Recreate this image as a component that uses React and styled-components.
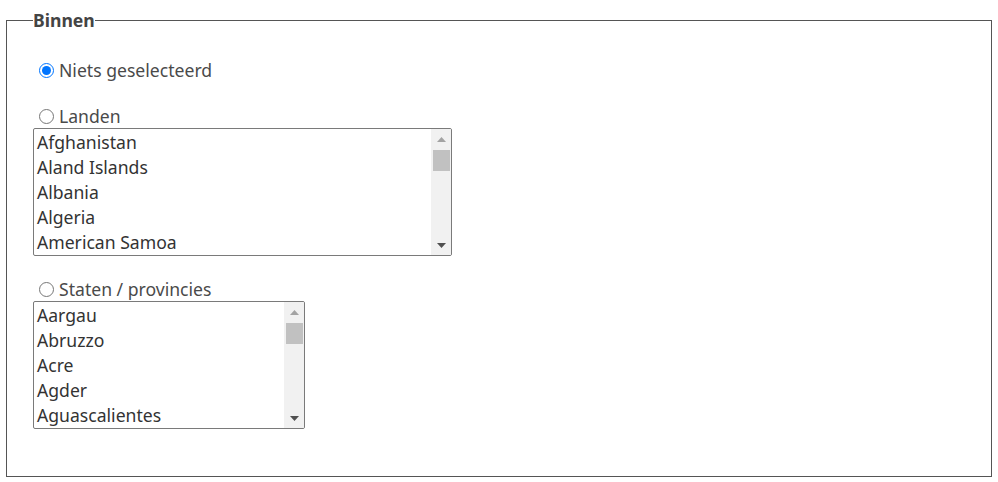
import React from "react";
import styled, { createGlobalStyle } from "styled-components";

const Global = createGlobalStyle`
  html, body { margin: 0; padding: 0; background: #fff; }
  body { font-family: "Noto Sans", "Open Sans", sans-serif; color: #4a4a4a; }
`;

const Page = styled.div`
  padding: 8px 6px 0 6px;
`;

const Fieldset = styled.fieldset`
  margin: 0;
  border: 1px solid #555;
  padding: 26px 26px 47px 26px;
  min-height: 0;
`;

const Legend = styled.legend`
  font-weight: bold;
  font-size: 17.6px;
  color: #444;
  padding: 0;
  line-height: 24px;
`;

const Group = styled.div`
  display: flex;
  flex-direction: column;
  align-items: flex-start;
  margin-top: ${(p) => p.$gap || 0}px;
`;

const Label = styled.label`
  display: flex;
  align-items: center;
  font-size: 17.6px;
  line-height: 24px;
  height: 24px;
  color: #4a4a4a;
  cursor: pointer;
`;

const Radio = styled.input.attrs({ type: "radio" })`
  margin: 0 5px 0 6px;
  width: 15px;
  height: 15px;
`;

const Box = styled.div`
  box-sizing: border-box;
  display: flex;
  width: ${(p) => p.$w}px;
  height: 128px;
  border: 1px solid #7a7a7a;
  border-radius: 2px;
  background: #fff;
  overflow: hidden;
`;

const Options = styled.div`
  flex: 1;
  padding-top: 1px;
  overflow-y: scroll;
  scrollbar-width: none;
  &::-webkit-scrollbar { display: none; }
`;

const Option = styled.div`
  font-size: 17.6px;
  line-height: 25px;
  height: 25px;
  padding: 0 3px;
  color: #333;
  white-space: nowrap;
  cursor: default;
`;

const Scrollbar = styled.div`
  width: 20px;
  flex: none;
  background: #f1f1f1;
  display: flex;
  flex-direction: column;
  align-items: center;
`;

const ArrowButton = styled.div`
  width: 100%;
  height: 20px;
  flex: none;
  display: flex;
  align-items: center;
  justify-content: center;
`;

const Track = styled.div`
  flex: 1;
  width: 100%;
  padding: 1px 1px 0 2px;
  box-sizing: border-box;
`;

const Thumb = styled.div`
  height: 21px;
  background: #c1c1c1;
`;

function Arrow({ up, color }) {
  return (
    <svg width="9" height="5" viewBox="0 0 9 5">
      <polygon
        points={up ? "0,5 9,5 4.5,0" : "0,0 9,0 4.5,5"}
        fill={color}
      />
    </svg>
  );
}

function ListBox({ items, width }) {
  return (
    <Box $w={width} role="listbox" aria-multiselectable="true">
      <Options>
        {items.map((it) => (
          <Option key={it} role="option" aria-selected="false">
            {it}
          </Option>
        ))}
      </Options>
      <Scrollbar>
        <ArrowButton>
          <Arrow up color="#a3a3a3" />
        </ArrowButton>
        <Track>
          <Thumb />
        </Track>
        <ArrowButton>
          <Arrow color="#505050" />
        </ArrowButton>
      </Scrollbar>
    </Box>
  );
}

const countries = [
  "Afghanistan","Aland Islands","Albania","Algeria","American Samoa","Andorra","Angola","Anguilla","Antarctica","Antigua and Barbuda","Argentina","Armenia","Aruba","Australia","Austria","Azerbaijan","Bahamas","Bahrain","Bangladesh","Barbados","Belarus","Belgium","Belize","Benin","Bermuda","Bhutan","Bolivia","Bosnia and Herzegovina","Botswana","Brazil","Bulgaria","Canada","Chile","China","Colombia","Croatia","Cyprus","Czech Republic","Denmark","Egypt","Estonia","Finland","France","Germany","Greece","Hungary","Iceland","India","Indonesia","Ireland","Israel","Italy","Japan","Luxembourg","Mexico","Netherlands","New Zealand","Norway","Poland","Portugal","Romania","South Georgia and the South Sandwich Islands","Spain","Sweden","Switzerland","United Kingdom","United States","Zimbabwe"
];

const states = [
  "Aargau","Abruzzo","Acre","Agder","Aguascalientes","Aichi","Akita","Alabama","Alagoas","Alaska","Alberta","Amapá","Amazonas","Andalucía","Aomori","Appenzell Ausserrhoden","Appenzell Innerrhoden","Aragón","Arizona","Arkansas","Bayern","Berlin","Bern","California","Florida","Texas","Zürich"
];

export default function App() {
  return (
    <>
      <Global />
      <Page>
        <Fieldset>
          <Legend>Binnen</Legend>
          <Group>
            <Label>
              <Radio name="binnen" defaultChecked />
              Niets geselecteerd
            </Label>
          </Group>
          <Group $gap={22}>
            <Label>
              <Radio name="binnen" />
              Landen
            </Label>
            <ListBox items={countries} width={419} />
          </Group>
          <Group $gap={21}>
            <Label>
              <Radio name="binnen" />
              Staten / provincies
            </Label>
            <ListBox items={states} width={272} />
          </Group>
        </Fieldset>
      </Page>
    </>
  );
}
